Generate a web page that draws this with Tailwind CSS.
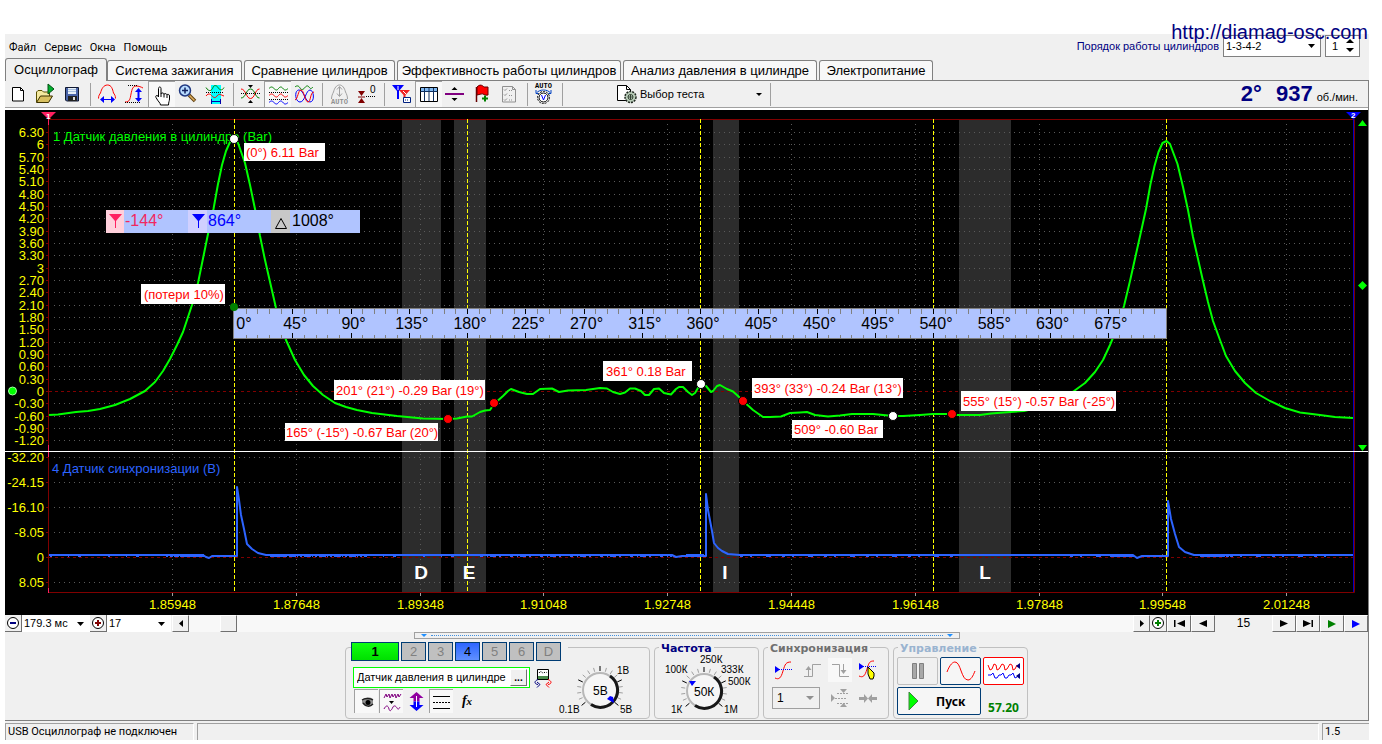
<!DOCTYPE html>
<html lang="ru">
<head>
<meta charset="utf-8">
<title>Осциллограф</title>
<script src="https://cdn.jsdelivr.net/npm/@tailwindcss/browser@4"></script>
</head>
<body class="bg-white text-black text-[11px] leading-[13px] font-['Liberation_Sans',Arial,sans-serif]">
<a href="http://diamag-osc.com" class="absolute top-[20px] right-[14px] z-10 text-[20px] leading-[24px] text-[#000080]">http://diamag-osc.com</a>

<main class="mt-[34px] ml-[5px] mr-[13px] bg-[#f0f0f0]">
  <header class="flex h-[24px] items-center justify-between pr-[9px]">
    <nav class="flex gap-2 pl-1 pt-0.5 font-[Roboto,sans-serif] text-[11px]">
      <button>Файл</button><button>Сервис</button><button>Окна</button><button>Помощь</button>
    </nav>
    <div class="flex items-center gap-1">
      <label for="order" class="text-[#000080]">Порядок работы цилиндров</label>
      <div class="relative">
        <select id="order" class="block h-[22px] w-[98px] appearance-none border border-[#808080] bg-white pl-0.5"><option>1-3-4-2</option></select>
        <svg class="pointer-events-none absolute right-1.5 top-[9px] h-[4px] w-[7px]" viewBox="0 0 7 4"><path d="M0 0h7L3.500 4z"/></svg>
      </div>
      <div class="relative">
        <input aria-label="Цилиндр" value="1" class="block h-[22px] w-[35px] border border-[#808080] bg-white pl-1.5">
        <svg class="pointer-events-none absolute right-1.5 top-[4px] h-[14px] w-[8px]" viewBox="0 0 8 14"><path d="M0 4h8L4 0zM0 9h8l-4 4z"/></svg>
      </div>
    </div>
  </header>

  <div role="tablist" class="flex h-[23px] items-end gap-0.5 border-b border-[#808080] text-[13px] leading-[18px]">
    <button role="tab" aria-selected="true" class="-mb-px -mr-0.5 h-[23px] w-[102px] whitespace-nowrap rounded-t-[3px] border border-b-0 border-[#808080] bg-[#f0f0f0]">Осциллограф</button>
    <button role="tab" class="h-[20px] w-[135px] whitespace-nowrap rounded-t-[3px] border border-b-0 border-[#808080] bg-[#f8f8f8]">Система зажигания</button>
    <button role="tab" class="h-[20px] w-[151px] whitespace-nowrap rounded-t-[3px] border border-b-0 border-[#808080] bg-[#f8f8f8]">Сравнение цилиндров</button>
    <button role="tab" class="h-[20px] w-[224px] whitespace-nowrap rounded-t-[3px] border border-b-0 border-[#808080] bg-[#f8f8f8]">Эффективность работы цилиндров</button>
    <button role="tab" class="h-[20px] w-[194px] whitespace-nowrap rounded-t-[3px] border border-b-0 border-[#808080] bg-[#f8f8f8]">Анализ давления в цилиндре</button>
    <button role="tab" class="h-[20px] w-[114px] whitespace-nowrap rounded-t-[3px] border border-b-0 border-[#808080] bg-[#f8f8f8]">Электропитание</button>
  </div>

  <section class="border-r border-b border-[#808080]">
    <div class="flex h-[29px] items-start border-b-2 border-white">
    <div class="flex h-[27px] w-full items-center border-b border-[#a0a0a0]">
      <button aria-label="Новый" class="flex h-[26px] w-[27px] items-center justify-center"><svg class="h-[24px] w-[25px]" viewBox="0 0 25 24"><path d="M6.500 5.500h8l3 3v10.500h-11z" fill="#fff" stroke="#000"/><path d="M14.500 5.500v3h3" fill="none" stroke="#000"/></svg></button>
      <button aria-label="Открыть" class="flex h-[26px] w-[27px] items-center justify-center"><svg class="h-[24px] w-[25px]" viewBox="0 0 25 24"><path d="M3.500 20v-10l1.500-1.500h4l1.500 1.500h6v4" fill="#f4e9a0" stroke="#5a5000"/><path d="M3.500 20.500l4-6.500h12l-4 6.500z" fill="#d8c060" stroke="#3a3000"/><path d="M15 2v10l6-5z" fill="#00b030" stroke="#005010"/></svg></button>
      <button aria-label="Сохранить" class="flex h-[26px] w-[27px] items-center justify-center"><svg class="h-[24px] w-[25px]" viewBox="0 0 25 24"><path d="M5.500 5.500h13v13.500h-12l-1-1z" fill="#4a64a8" stroke="#101830"/><path d="M8 6h8v6h-8z" fill="#e8f0f8"/><path d="M8 7.500h8M8 9.500h8" stroke="#a8c0e0"/><path d="M8 14h9v5h-9z" fill="#222"/><path d="M13 15h2v3h-2z" fill="#ddd"/></svg></button>
      <span class="flex w-2 justify-center"><i class="h-[23px] w-px bg-[#a0a0a0]"></i></span>
      <button aria-label="Период" class="flex h-[26px] w-[27px] items-center justify-center"><svg class="h-[24px] w-[25px]" viewBox="0 0 25 24"><path d="M3.500 16.500c0-3 1-4 2-5.500 1-4 3-8 7-8s5 4 6 8c1 1.500 2 2.500 2 5.500" fill="none" stroke="#f00"/><path d="M5 17.500l4-3.500v3h7v-3l4 3.500-4 3.500v-3h-7v3z" fill="#00f"/></svg></button>
      <button aria-label="Амплитуда" class="flex h-[26px] w-[27px] items-center justify-center"><svg class="h-[24px] w-[25px]" viewBox="0 0 25 24"><path d="M3 20c5 0 5-3 6-8s2-8 5-8 5 1 7 2" fill="none" stroke="#f00"/><path d="M6 3.500h10M3 20.500h15" stroke="#000" stroke-dasharray="1 1"/><path d="M16.500 6l3.500 4h-2.500v6h2.500l-3.500 4-3.500-4h2.500v-6h-2.500z" fill="#00f"/></svg></button>
      <button aria-label="Рука" aria-pressed="true" class="flex h-[26px] w-[27px] items-center justify-center border-l border-t border-[#a0a0a0] bg-[#f8f8f8]"><svg class="h-[24px] w-[25px]" viewBox="0 0 25 24"><path d="M8.500 14V5.500c0-2 2.500-2 2.500 0V11c0-1.500 3-1.500 3 .500 0-1.500 3-1 3 .500 0-1 2.500-1 2.500 1v3c0 2-1 3-1 6h-8c0-2-2.500-3.500-4.500-7.500-1-2 1-2.500 2-1.500z" fill="#fff" stroke="#000"/><path d="M11 11v3M14 11.500v3M17 12v3" stroke="#000"/></svg></button>
      <button aria-label="Масштаб" class="flex h-[26px] w-[27px] items-center justify-center"><svg class="h-[24px] w-[25px]" viewBox="0 0 25 24"><path d="M13 13l6 6" stroke="#604010" stroke-width="3.500"/><path d="M13.500 13.500l5 5" stroke="#e0b060" stroke-width="1.500"/><circle cx="9" cy="8.500" r="5.500" fill="#b8dcff" stroke="#203880" stroke-width="1.500"/><path d="M6 8.500h6M9 5.500v6" stroke="#102060" stroke-width="1.500"/></svg></button>
      <button aria-label="Интервал" class="flex h-[26px] w-[27px] items-center justify-center"><svg class="h-[24px] w-[25px]" viewBox="0 0 25 24"><path d="M8 3h10v19h-10z" fill="#0ff"/><path d="M3 5.500c3 5 6 3 7 0s4-2 5 0 4 4 6 0" fill="none" stroke="#008000"/><path d="M3 14c3-4 5-1 6 0s3 3 5 0 4-1 7 0" fill="none" stroke="#f00"/><path d="M3 10.500h18" stroke="#000" stroke-dasharray="1 1"/><path d="M9 19.500h8" stroke="#00a"/><path d="M8.500 17v5M17.500 17v5" stroke="#00a"/></svg></button>
      <span class="flex w-2 justify-center"><i class="h-[23px] w-px bg-[#a0a0a0]"></i></span>
      <button aria-label="Сжать" class="flex h-[26px] w-[27px] items-center justify-center"><svg class="h-[24px] w-[25px]" viewBox="0 0 25 24"><path d="M3 16c5 0 5-9 9.500-9s4.500 9 9 9" fill="none" stroke="#008000"/><path d="M3 7c5 0 5 9.500 9.500 9.500s4.500-9.500 9-9.500" fill="none" stroke="#f00"/><path d="M3 11.500h19" stroke="#000" stroke-dasharray="1 1"/><path d="M10 3h5l-2.500 3zM10 21h5l-2.500-3z"/></svg></button>
      <button aria-label="Раздельно" aria-pressed="true" class="flex h-[26px] w-[27px] items-center justify-center border-l border-t border-[#a0a0a0] bg-[#f8f8f8]"><svg class="h-[24px] w-[25px]" viewBox="0 0 25 24" fill="none"><path d="M3 5.500c2-2 3-2 5 0s3 2 4.500 0 3-2 4.500 0 3 2 5 0" stroke="#008000"/><path d="M3 12.500c2-2 3-2 5 0s3 2 4.500 0 3-2 4.500 0 3 2 5 0" stroke="#f00"/><path d="M3 19.500c2-2 3-2 5 0s3 2 4.500 0 3-2 4.500 0 3 2 5 0" stroke="#00f"/><path d="M3 9.500h19M3 16.500h19" stroke="#000" stroke-dasharray="1 1"/></svg></button>
      <button aria-label="Вместе" class="flex h-[26px] w-[27px] items-center justify-center"><svg class="h-[24px] w-[25px]" viewBox="0 0 25 24" fill="none"><path d="M3 5c2-2 4-1 5 1s3 2 4.500 0 3-3 4.500-1 2 2 4 0" stroke="#008000"/><path d="M8 20c-5 0-6-12-1-12s6 12 11 12 4-12 0-12-5 12-10 12z" stroke="#00f"/><path d="M3 18c3-1 3-10 6-10s4 12 7 12 2-10 6-10" stroke="#f00"/></svg></button>
      <span class="flex w-2 justify-center"><i class="h-[23px] w-px bg-[#a0a0a0]"></i></span>
      <button disabled aria-label="Авто" class="flex h-[26px] w-[27px] items-center justify-center"><svg class="h-[24px] w-[25px]" viewBox="0 0 25 24"><path d="M4.500 17c0-3 1-5 2-7 1-4 3-7 6-7s5 3 6 7c1 2 2 4 2 7M12.500 5v9M10 7.500l2.500-3 2.500 3M10 11.500l2.500 3 2.500-3" fill="none" stroke="#a0a0a0"/><text x="12.500" y="22" text-anchor="middle" fill="#909090" class="text-[7px] font-bold font-['Liberation_Mono',monospace]">AUTO</text></svg></button>
      <button aria-label="Ноль" class="flex h-[26px] w-[27px] items-center justify-center"><svg class="h-[24px] w-[25px]" viewBox="0 0 25 24"><path d="M4 9h7l-3.500 5zM4 21h7l-3.500-5z" fill="#800000"/><path d="M4 15h7" stroke="#800000"/><path d="M12 14.500h10" stroke="#000" stroke-dasharray="1 1"/><text x="16" y="11" class="text-[10px]">0</text></svg></button>
      <span class="flex w-2 justify-center"><i class="h-[23px] w-px bg-[#a0a0a0]"></i></span>
      <button aria-label="Маркеры" class="flex h-[26px] w-[27px] items-center justify-center"><svg class="h-[24px] w-[25px]" viewBox="0 0 25 24"><path d="M3 3h12l-5 6v8h-2v-8z" fill="#00f"/><path d="M9 4v4" stroke="#fff"/><path d="M10 8h11l-4.500 5v3h-2v-3z" fill="#f02020"/><path d="M14 9l3 3" stroke="#fff"/><path d="M14.500 15.500h7v5h-7z" fill="#fff" stroke="#002080"/><path d="M16 18h4" stroke="#002080" stroke-dasharray="1 1"/></svg></button>
      <button aria-label="Таблица" aria-pressed="true" class="flex h-[26px] w-[27px] items-center justify-center border-l border-t border-[#a0a0a0] bg-[#f8f8f8]"><svg class="h-[24px] w-[25px]" viewBox="0 0 25 24"><path d="M3.500 4.500h17v14h-17z" fill="#fff" stroke="#000"/><path d="M4 5h16v3h-16z" fill="#80b8f0"/><path d="M3.500 8.500h17M7.500 5v13M12 5v13M16.500 5v13" stroke="#103060"/></svg></button>
      <button aria-label="Линия" class="flex h-[26px] w-[27px] items-center justify-center"><svg class="h-[24px] w-[25px]" viewBox="0 0 25 24"><path d="M2 11h19v2h-19z" fill="#800080"/><path d="M8.500 8h6l-3-3zM8.500 16h6l-3 3z"/></svg></button>
      <button aria-label="Добавить метку" class="flex h-[26px] w-[27px] items-center justify-center"><svg class="h-[24px] w-[25px]" viewBox="0 0 25 24"><path d="M6.500 5v15" stroke="#600" stroke-width="1.500"/><path d="M7 5c3-3 5-2 7 0h4v8c-3 1-5-2-7-1l-4 1z" fill="#f00" stroke="#600"/><path d="M12 16.500h6M15 13.500v6" stroke="#008000" stroke-width="2"/></svg></button>
      <button disabled aria-label="Список" class="flex h-[26px] w-[27px] items-center justify-center"><svg class="h-[24px] w-[25px]" viewBox="0 0 25 24" fill="none" stroke="#909090"><path d="M5.500 4.500h10l3 3v12.500h-13zM15.500 4.500v3h3"/><path d="M7 7.500l1 1 2-2M7 12.500l1 1 2-2M7 17.500l1 1 2-2"/><path d="M12 8.500h4M12 13.500h4M12 18h4" stroke-dasharray="1 1"/></svg></button>
      <span class="flex w-2 justify-center"><i class="h-[23px] w-px bg-[#a0a0a0]"></i></span>
      <button aria-label="Авто вольт" class="flex h-[26px] w-[27px] items-center justify-center"><svg class="h-[24px] w-[25px]" viewBox="0 0 25 24"><text x="11.500" y="6" text-anchor="middle" class="text-[7px] font-bold font-['Liberation_Mono',monospace]">AUTO</text><path d="M4.500 11c3-4 11-4 14 0M4 8v3.500h3.500M19 8v3.500h-3.500" fill="none" stroke="#0040c0"/><circle cx="11.500" cy="15.500" r="6" fill="#fff" stroke="#000" stroke-dasharray="2 1"/><circle cx="11.500" cy="15.500" r="4.500" fill="#fff" stroke="#000"/><path d="M9.500 13l2 5 2-5" fill="none" stroke="#00f"/></svg></button>
      <span class="flex w-2 justify-center"><i class="h-[23px] w-px bg-[#a0a0a0]"></i></span>
      <button class="ml-[48px] flex h-[26px] w-[152px] items-center">
        <svg class="h-[24px] w-[24px]" viewBox="0 0 24 24"><path d="M3.500 3.500h9l4 4v11h-13z" fill="#fff" stroke="#000"/><path d="M12.500 3.500v4h4" fill="none" stroke="#000"/><circle cx="16.500" cy="15" r="5.500" fill="#b8ccb8" stroke="#202820" stroke-width="1.500" stroke-dasharray="2 1"/><circle cx="16.500" cy="15" r="2.500" fill="#d8e8d8" stroke="#304030"/><path d="M14 15h5M16.500 12.500v5" stroke="#304030"/></svg>
        <span class="grow pl-0.5 text-left">Выбор теста</span>
        <svg class="mr-1 h-[3px] w-[6px]" viewBox="0 0 6 3"><path d="M0 0h6l-3 3z"/></svg>
      </button>
      <span class="flex w-2 justify-center"><i class="h-[23px] w-px bg-[#a0a0a0]"></i></span>
      <p class="ml-auto mr-[10px] flex items-baseline gap-1 text-[#000080]"><b class="text-[22px] leading-[24px]">2°</b><b class="ml-2.5 text-[22px] leading-[24px]">937</b><span class="text-black">об./мин.</span></p>
    </div>
    </div>

    <svg id="chart" class="block w-full bg-black text-[13px]" viewBox="5 110 1363 505" role="img" aria-label="Осциллограмма">
      <g fill="#2c2c2c"><path d="M402 120h39v472h-39zM454 120h32v472h-32zM713 120h26v472h-26zM959 120h52v472h-52z"/></g>
      <g id="grid" stroke="#5a5a5a" stroke-dasharray="1 4"></g>
      <path d="M49 391.500H1353M49 557.500H1353" stroke="#800000" stroke-dasharray="3 3"/>
      <path d="M48.500 119.500H1354.500V592.500H48.500z" fill="none" stroke="#800000"/>
      <path d="M1353.500 119V592" stroke="#0000c0"/>
      <path d="M48.500 118v7M48.500 445v12M48.500 588v5" stroke="#ff2060"/>
      <path d="M41 112h15l-7.500 7.500z" fill="#ff2060"/><text x="46" y="119" fill="#fff" class="text-[8px] font-bold">1</text>
      <path d="M1346 112h15l-7.500 7.500z" fill="#00f"/><text x="1351" y="118" fill="#fff" class="text-[8px] font-bold">2</text>
      <g id="axis" fill="#ff0"></g>
      <text x="53" y="141" fill="#0f0">1 Датчик давления в цилиндре (Bar)</text>
      <text x="52" y="473" fill="#2d64ff">4 Датчик синхронизации (В)</text>
      <path d="M234.500 119V592M467.500 119V592M700.500 119V592M933.500 119V592M1166.500 119V592" stroke="#ff0" stroke-dasharray="4 2"/>
      <path fill="none" stroke="#0f0" stroke-width="2" stroke-linejoin="round" d="M49 415L58 414.500 76 412 88 411 100 409 115 405 130 399 145 391 155 382 163 371 170 359 177 345 183 332 192 305 198 283 208 234 213.500 209 218 184 222 165 226 151 230 142 234 139 238 143 245 163 250 185 255 209 260 236 265 260 276 308 286 340 295 360 304 375 313 386 323 395 335 403 346 407 357 410 372 413 397 416 423 418.500 448 419 457 418.500 467 416.500 472 416.500 480 412 485 410.500 490 410 494 404 503 396 508 391 511 389 515 390.500 519 392 527 394 533 394 540 389 552 388.500 559 392 568 390.500 586 390 600 388 607 388.500 613 392 620 394 625 392.500 630 388.500 635 388.500 641 391 645 395 649 395 654 389 659 388.500 664 393 671 394.500 676 389 679 387 683 387 688 392 692 395 695 393 698 388 701 384 706 386 711 392 713 391 717 386 720 385 727 389 733 391.500 738 396 743 401 753 410 763 417 770 417 781 416.500 790 413 800 412.500 807 412 815 415 828 416.500 840 415.500 852 414 873 414 893 416 903 416 920 415 933 414 947 414 952 414.500 958 415 980 415 991 413.500 1010 412 1024 411 1045 406 1062 398 1074 391 1085 383 1095 372 1103 360 1110 345 1117 328 1124 306 1130 281 1140.500 234 1146 209 1150.500 184 1154.500 166 1158.500 152 1162.500 143 1166.500 141 1170 144 1177.500 164 1183 187 1188 210 1193 237 1198 259 1203 281 1208 302 1213 321 1220 340 1226 356 1235 371 1245 383 1256 393 1270 401 1285 408 1300 412.500 1320 415 1335 417 1353 418"/>
      <g fill="none" stroke="#2d64ff">
        <path stroke-width="2" stroke-linejoin="round" d="M49 555H203L206 557 209 558 212 556H237V487L239 500 241 515 244 529 247 544 252 549 258 553 266 555H672L676 557 682 556H706V494L708 510 712 531 714 543 718 548 722 551 728 554 740 555H1133L1137 558 1142 556H1168V501L1171 519 1175 534 1179 547 1185 552 1194 555H1353"/>
        <path d="M170 556.500H205" stroke-dasharray="3 1 5 1 1 1"/><path d="M50 556.500H170M365 556.500H480" stroke-dasharray="2 16 1 9 3 27"/><path d="M270 556.500H366" stroke-dasharray="2 2 7 1 1 2"/><path d="M480 556.500H672" stroke-dasharray="3 4 1 2 6 3 2 9"/><path d="M685 556.500H704M1110 556.500H1134M1200 556.500H1230" stroke-dasharray="5 1 3 1"/><path d="M740 556.500H960M1070 556.500H1110M1230 556.500H1330" stroke-dasharray="3 7 2 14 5 11"/>
        <path stroke-width="3" d="M181 555.500H204M272 555.500H286M1115 555.500H1133M1204 555.500H1220M686 555.500H704"/>
      </g>
      <path d="M5 451.500H1368" stroke="#fff"/>
      <g fill="#fff" class="text-[19px] font-bold" text-anchor="middle"><text x="421" y="579">D</text><text x="469" y="579">E</text><text x="725" y="579">I</text><text x="985" y="579">L</text></g>
      <g id="ruler"><path d="M233.500 308.500h933v30h-933z" fill="#b0c4ff" stroke="#808080"/></g>
      <g class="text-[16px]">
        <path d="M106 210h254v23h-254z" fill="#b0c4ff"/><path d="M106 210h18v23h-18z" fill="#ffd0dc"/><path d="M188 210h19v23h-19z" fill="#d0d0ff"/><path d="M271 210h19v23h-19z" fill="#c8c8c8"/>
        <path d="M109 214h13l-6 7v7h-1v-7z" fill="#ff2060"/><path d="M192 214h13l-6 7v7h-1v-7z" fill="#00f"/><path d="M275.500 228.500h11l-5.500-10z" fill="none" stroke="#000"/>
        <text x="125" y="226" fill="#f02860">-144°</text><text x="208" y="226" fill="#00f">864°</text><text x="292" y="226">1008°</text>
      </g>
      <path fill="#fff" d="M244 143h81v18h-81zM141 284h84v20h-84zM334 380h151v20h-151zM285 423h153v18h-153zM603 361h89v20h-89zM752 378h151v20h-151zM792 420h91v18h-91zM961 391h155v20h-155z"/>
      <g fill="#f00"><text x="246" y="157">(0°) 6.11 Bar</text><text x="144" y="299">(потери 10%)</text><text x="336" y="395">201° (21°) -0.29 Bar (19°)</text><text x="286" y="437">165° (-15°) -0.67 Bar (20°)</text><text x="606" y="376">361° 0.18 Bar</text><text x="754" y="393">393° (33°) -0.24 Bar (13°)</text><text x="794" y="434">509° -0.60 Bar</text><text x="963" y="406">555° (15°) -0.57 Bar (-25°)</text></g>
      <g stroke="#000"><g fill="#fff"><circle cx="234" cy="139" r="4.500"/><circle cx="701" cy="384" r="4.500"/><circle cx="893" cy="416" r="4.500"/></g><g fill="#f00"><circle cx="448" cy="419" r="4.500"/><circle cx="494" cy="403" r="4.500"/><circle cx="743" cy="401" r="4.500"/><circle cx="952" cy="414" r="4.500"/></g></g>
      <circle cx="234" cy="307" r="4" fill="#008000"/><circle cx="12.500" cy="391" r="4" fill="#0f0" stroke="#a0ffa0"/>
      <path d="M1358 126h9l-4.500-6zM1362.500 281l4.500 4.500-4.500 4.500-4.500-4.500zM1358 445h9l-4.500 6z" fill="#0f0"/>
    </svg>

    <div class="flex h-[17px] items-stretch">
      <button aria-label="Уменьшить" class="w-[17px] border-r border-b border-[#707070] bg-[#f0f0f0]"><svg class="block h-[16px] w-[16px]" viewBox="0 0 16 16"><circle cx="8" cy="8" r="5.500" fill="#fff" stroke="#000"/><path d="M5 8h6" stroke="#000080" stroke-width="2"/></svg></button>
      <div class="relative"><select aria-label="Длительность" class="block h-[17px] w-[68px] appearance-none bg-white pl-0.5"><option>179.3 мс</option></select><svg class="pointer-events-none absolute right-1.5 top-[7px] h-[4px] w-[7px]" viewBox="0 0 7 4"><path d="M0 0h7L3.500 4z"/></svg></div>
      <button aria-label="Увеличить" class="w-[17px] border-r border-b border-[#707070] bg-[#f0f0f0]"><svg class="block h-[16px] w-[16px]" viewBox="0 0 16 16"><circle cx="8" cy="8" r="5.500" fill="#fff" stroke="#000"/><path d="M5 8h6M8 5v6" stroke="#800000" stroke-width="2"/></svg></button>
      <div class="relative"><select aria-label="Кадр" class="block h-[17px] w-[64px] appearance-none bg-white pl-0.5"><option>17</option></select><svg class="pointer-events-none absolute right-1.5 top-[7px] h-[4px] w-[7px]" viewBox="0 0 7 4"><path d="M0 0h7L3.500 4z"/></svg></div>
      <button aria-label="Влево" class="ml-px flex w-[17px] items-center justify-center border border-l-white border-t-white border-r-[#707070] border-b-[#707070]"><svg class="h-[7px] w-[4px]" viewBox="0 0 4 7"><path d="M4 0v7L0 3.500z"/></svg></button>
      <div class="grow bg-[#f8f8f8] pl-[31px]"><button aria-label="Полоса прокрутки" class="block h-[17px] w-[17px] border border-l-white border-t-white border-r-[#707070] border-b-[#707070] bg-[#f0f0f0]"></button></div>
      <button aria-label="Вправо" class="flex w-[17px] items-center justify-center border border-l-white border-t-white border-r-[#707070] border-b-[#707070]"><svg class="h-[7px] w-[4px]" viewBox="0 0 4 7"><path d="M0 0v7l4-3.500z"/></svg></button>
      <button aria-label="Добавить" class="w-[17px] border-r border-b border-[#707070]"><svg class="block h-[16px] w-[16px]" viewBox="0 0 16 16"><circle cx="8" cy="8" r="5.500" fill="#fff" stroke="#000"/><path d="M5 8h6M8 5v6" stroke="#008000" stroke-width="2"/></svg></button>
      <button aria-label="В начало" class="flex w-[24px] items-center justify-center border border-l-white border-t-white border-r-[#707070] border-b-[#707070]"><svg class="h-[7px] w-[11px]" viewBox="0 0 11 7"><path d="M0 0h1.500v7H0zM11 0v7L3 3.500z"/></svg></button>
      <button aria-label="Назад" class="flex w-[24px] items-center justify-center border border-l-white border-t-white border-r-[#707070] border-b-[#707070]"><svg class="h-[7px] w-[8px]" viewBox="0 0 8 7"><path d="M8 0v7L0 3.500z"/></svg></button>
      <output class="w-[57px] self-center text-center text-[12px]">15</output>
      <button aria-label="Вперёд" class="flex w-[24px] items-center justify-center border border-l-white border-t-white border-r-[#707070] border-b-[#707070]"><svg class="h-[7px] w-[8px]" viewBox="0 0 8 7"><path d="M0 0v7l8-3.500z"/></svg></button>
      <button aria-label="В конец" class="flex w-[24px] items-center justify-center border border-l-white border-t-white border-r-[#707070] border-b-[#707070]"><svg class="h-[7px] w-[10px]" viewBox="0 0 10 7"><path d="M8.500 0H10v7H8.500zM0 0v7l8-3.500z"/></svg></button>
      <button aria-label="Играть" class="flex w-[24px] items-center justify-center border border-l-white border-t-white border-r-[#707070] border-b-[#707070]"><svg class="h-[8px] w-[8px]" viewBox="0 0 8 8"><path d="M0 0v8l8-4z" fill="#008000"/></svg></button>
      <button aria-label="Играть всё" class="flex w-[24px] items-center justify-center border border-l-white border-t-white border-r-[#707070] border-b-[#707070]"><svg class="h-[8px] w-[8px]" viewBox="0 0 8 8"><path d="M0 0v8l8-4z" fill="#00f"/></svg></button>
    </div>

    <div class="mx-auto flex h-[7px] w-[546px] items-center justify-between border border-[#a0a0a0] px-1.5">
      <svg class="h-[3px] w-[6px]" viewBox="0 0 6 3"><path d="M0 0h6l-3 3z" fill="#2090ff"/></svg>
      <i class="mx-1 grow border-t border-dotted border-[#4090e0]"></i>
      <svg class="h-[3px] w-[6px]" viewBox="0 0 6 3"><path d="M0 0h6l-3 3z" fill="#2090ff"/></svg>
    </div>

    <div class="flex items-stretch justify-center gap-1 pb-px pt-2">
      <section class="flex min-h-[72px] w-[305px] rounded-[4px] border border-[#c0c0c0] px-[5px]">
        <div class="w-[206px] shrink-0">
          <div class="-mt-[6px] flex w-[217px] gap-0.5 bg-[#f0f0f0] text-[13px] text-[#808080]">
            <button class="h-[19px] w-[48px] border border-[#003c74] bg-linear-to-b from-[#10ff10] to-[#00e000] font-bold text-black">1</button>
            <button class="h-[19px] w-[25px] border border-[#003c74] bg-[#c0c0c0]">2</button>
            <button class="h-[19px] w-[25px] border border-[#003c74] bg-[#c0c0c0]">3</button>
            <button class="h-[19px] w-[25px] border border-[#003c74] bg-linear-to-b from-[#2d64ff] to-[#6090ff] text-black">4</button>
            <button class="h-[19px] w-[25px] border border-[#003c74] bg-[#c0c0c0]">5</button>
            <button class="h-[19px] w-[25px] border border-[#003c74] bg-[#c0c0c0]">6</button>
            <button class="h-[19px] w-[25px] border border-[#003c74] bg-[#c0c0c0]">D</button>
          </div>
          <div class="ml-0.5 mt-1.5 flex items-center gap-1">
            <div class="flex h-[21px] w-[177px] items-center border border-[#0f0] bg-white pl-[3px] pr-0.5">
              <input aria-label="Датчик" value="Датчик давления в цилиндре" class="min-w-0 grow bg-white text-[11px]">
              <button aria-label="Выбрать датчик" class="h-[17px] w-[17px] border border-l-white border-t-white border-r-[#707070] border-b-[#707070] bg-[#f0f0f0] text-[10px] font-bold leading-[8px]">...</button>
            </div>
            <button aria-label="Поменять" class="shrink-0"><svg class="block h-[20px] w-[18px]" viewBox="0 0 18 20"><path d="M3.500 1.500h11v10h-11z" fill="#fff" stroke="#000"/><path d="M4 8h10v3h-10z" fill="#4a8a4a"/><path d="M5 5c2-3 3 0 4 0s3-2 4 0" fill="none" stroke="#000" stroke-dasharray="1 1"/><path d="M4 11.500C0 13 0 16 4 16.500M3 14l3 2.500-3 3" fill="none" stroke="#000080"/><path d="M14 11.500c4 1.500 4 4.500 0 5M15 14l-3 2.500 3 3" fill="none" stroke="#f00"/></svg></button>
          </div>
          <div class="ml-[3px] mt-px flex">
            <button aria-label="Видимость" aria-pressed="true" class="h-[24px] w-[24px] border-l border-t border-[#a0a0a0] bg-[#f8f8f8]"><svg class="block h-[23px] w-[23px]" viewBox="0 0 23 23"><path d="M7 10c3-3 8-3 11-1v5c-2 3-7 4-11-1z" fill="#909090"/><path d="M7 10c3-2 8-2 11 0M8 13c3 4 7 4 10 1" fill="none" stroke="#202020" stroke-width="1.500"/><circle cx="13" cy="12.500" r="2.500"/></svg></button>
            <button aria-label="Фильтр" aria-pressed="true" class="ml-px h-[24px] w-[24px] border-l border-t border-[#a0a0a0] bg-[#f8f8f8]"><svg class="block h-[23px] w-[23px]" viewBox="0 0 23 23" fill="none"><path d="M4 8l2-4 1 3 2-3 1 4 2-4 1 3 2-3 1 4 2-4 1 3 2-3" stroke="#800080"/><path d="M4 19c2-4 4-4 5 0s3 0 4-2 3-1 4 1 2 1 3-1" stroke="#800080"/><path d="M9 11h5l-2.500 3z" fill="#000"/></svg></button>
            <button aria-label="Сдвиг" class="ml-px h-[24px] w-[24px]"><svg class="block h-[24px] w-[24px]" viewBox="0 0 24 24"><path d="M12.500 3l7 6h-4v3.500h-6V9h-4z" fill="#9000a0"/><path d="M12.500 22l-7-6h4v-3.500h6V16h4z" fill="#00f"/><path d="M12.500 7v11" stroke="#fff"/></svg></button>
            <button aria-label="Уровни" aria-pressed="true" class="ml-px h-[24px] w-[24px] border-l border-t border-[#a0a0a0] bg-[#f8f8f8]"><svg class="block h-[23px] w-[23px]" viewBox="0 0 23 23" stroke="#000"><path d="M3 6.500h17M3 18.500h17"/><path d="M3 12.500h17" stroke-dasharray="2 1"/></svg></button>
            <button aria-label="Функция" class="ml-px h-[24px] w-[26px] font-['Liberation_Serif',serif] text-[14px] font-bold italic">f<span class="text-[11px]">x</span></button>
          </div>
        </div>
        <svg class="h-[70px] w-[87px] shrink-0 text-[10px]" viewBox="558 649 87 70">
          <g class="ticks" data-cx="601" data-cy="691"></g>
          <circle cx="601" cy="691" r="17" fill="#f6f6f6" stroke="#b8b8b8" stroke-width="2"/><path d="M611 677a17 17 0 0 1-19 28.500" fill="none" stroke="#181818" stroke-width="3"/>
          <path d="M608 700l7 4-1-6-3-1z" fill="#00f"/>
          <text x="594" y="696" class="text-[12px]">5В</text><text x="618" y="675">1В</text><text x="621" y="714">5В</text><text x="560" y="714">0.1В</text>
        </svg>
      </section>

      <section class="min-h-[72px] w-[105px] rounded-[4px] border border-[#c0c0c0]">
        <h2 class="-mt-[6px] ml-1 w-fit bg-[#f0f0f0] px-0.5 font-['DejaVu_Sans',sans-serif] text-[11px] font-bold leading-[14px] text-[#000080]">Частота</h2>
        <svg class="-mt-0.5 block h-[64px] w-full text-[10px]" viewBox="656 655 103 64">
          <g class="ticks" data-cx="705" data-cy="692"></g>
          <circle cx="705" cy="692" r="17" fill="#f6f6f6" stroke="#b8b8b8" stroke-width="2"/><path d="M715 678a17 17 0 0 1-19 28.500" fill="none" stroke="#181818" stroke-width="3"/>
          <path d="M690 682h7l-4 5z" fill="#00f"/>
          <text x="695" y="697" class="text-[12px]">50К</text><text x="666" y="674">100К</text><text x="701" y="664">250К</text><text x="722" y="674">333К</text><text x="729" y="686">500К</text><text x="672" y="714">1К</text><text x="725" y="714">1М</text>
        </svg>
      </section>

      <section class="min-h-[72px] w-[126px] rounded-[4px] border border-[#c0c0c0]">
        <h2 class="-mt-[6px] ml-1 w-fit bg-[#f0f0f0] px-0.5 font-['DejaVu_Sans',sans-serif] text-[11px] font-bold leading-[14px] text-[#707070]">Синхронизация</h2>
        <div class="grid grid-cols-4 items-center justify-items-center px-1.5 pt-0.5">
          <button aria-label="Синхронизация по уровню"><svg class="block h-[24px] w-[24px]" viewBox="0 0 24 24" fill="none"><path d="M3 20c4 2 6 0 8-7s3-9 8-9" stroke="#f00"/><path d="M3 11.500h18" stroke="#00f" stroke-dasharray="1 1"/><path d="M3 8v7l5-3.500z" fill="#00f"/></svg></button>
          <button disabled aria-label="Фронт"><svg class="block h-[24px] w-[24px]" viewBox="0 0 24 24" fill="none"><path d="M4 18.500h8.500v-12H21M8.500 18v-7" stroke="#a0a0a0"/><path d="M5.500 12h6l-3-4z" fill="#a0a0a0"/></svg></button>
          <button disabled aria-label="Спад" class="bg-[#f8f8f8]"><svg class="block h-[24px] w-[24px]" viewBox="0 0 24 24" fill="none"><path d="M4 6.500h7.500v12H21M15.500 6v8" stroke="#a0a0a0"/><path d="M12.500 12h6l-3 4z" fill="#a0a0a0"/></svg></button>
          <button aria-label="Указать уровень"><svg class="block h-[24px] w-[24px]" viewBox="0 0 24 24" fill="none"><path d="M3 18c4 2 6 0 8-7s3-8 7-8" stroke="#f00"/><path d="M3 8.500h18" stroke="#00f" stroke-dasharray="1 1"/><path d="M3 5v7l5-3.500z" fill="#00f"/><path d="M12 9l6 6v3l-1 3h-3l-2-5z" fill="#ff0" stroke="#000"/></svg></button>
          <div class="relative col-span-2 justify-self-start"><select disabled aria-label="Канал синхронизации" class="ml-0.5 block h-[22px] w-[48px] appearance-none border border-[#a0a0a0] bg-[#f0f0f0] pl-1 text-[12px] text-black opacity-100"><option>1</option></select><svg class="pointer-events-none absolute right-1.5 top-[9px] h-[4px] w-[8px]" viewBox="0 0 8 4"><path d="M0 0h8L4 4z" fill="#909090"/></svg></div>
          <button disabled aria-label="Пределы"><svg class="my-1 block h-[24px] w-[24px]" viewBox="0 0 24 24" fill="none"><path d="M9 7.500h12M7 12.500h12M9 17.500h12" stroke="#a0a0a0" stroke-dasharray="2 1"/><path d="M3 8v8l4-4zM12 3h7l-3.500 4zM12 21h7l-3.500-4z" fill="#a0a0a0"/></svg></button>
          <button disabled aria-label="Сблизить"><svg class="block h-[24px] w-[24px]" viewBox="0 0 24 24"><path d="M3 11h5v-3l4 4.500-4 4.500v-3H3zM21 11h-5v-3l-4 4.500 4 4.500v-3h5z" fill="#a0a0a0"/></svg></button>
        </div>
      </section>

      <section class="min-h-[72px] w-[135px] rounded-[4px] border border-[#c0c0c0]">
        <h2 class="-mt-[6px] ml-1 w-fit bg-[#f0f0f0] px-0.5 font-['DejaVu_Sans',sans-serif] text-[11px] font-bold leading-[14px] text-[#9ab4d0]">Управление</h2>
        <div class="grid grid-cols-3 gap-x-0.5 gap-y-0.5 px-[3px] pt-px">
          <button disabled aria-label="Пауза" class="flex h-[28px] items-center justify-center rounded-[2px] border border-[#c0c0c0]"><svg class="h-[16px] w-[12px]" viewBox="0 0 12 16"><path d="M.500 .500h4v15h-4zM7.500 .500h4v15h-4z" fill="#a8a8a8" stroke="#808080"/></svg></button>
          <button aria-label="Осциллограмма" class="flex h-[28px] items-center justify-center rounded-[2px] border border-[#003c74] bg-[#f6f6f6]"><svg class="h-[22px] w-[32px]" viewBox="0 0 32 22"><path d="M2 12C5 4 8 2 10 2c6 0 6 18 13 18 3 0 5-4 7-9" fill="none" stroke="#f00"/></svg></button>
          <button aria-label="Каналы" class="flex h-[28px] items-center justify-center rounded-[2px] border border-[#f00] bg-white"><svg class="h-[22px] w-[34px]" viewBox="0 0 34 22" fill="none"><path d="M1 5l2 5 2-1 2-5 2 1 1 5 2-1 3-5 2 1 1 5 2-1 3-5 2 1 1 5 2-1 2-4" stroke="#f00"/><path d="M1 15h3l2-2 2 5 2 0 2-3h2l2-2 2 5 2 0 2-3h2l2-2 2 5 2-1" stroke="#00f"/><path d="M33 3v6l-4-3zM33 13v6l-4-3z" fill="#000080"/></svg></button>
          <button class="col-span-2 flex h-[28px] items-center rounded-[2px] border border-[#003c74] bg-[#f6f6f6] pl-2.5 font-['Noto_Sans',sans-serif] text-[12px] font-bold"><svg class="mr-4 h-[20px] w-[12px]" viewBox="0 0 12 20"><path d="M1 1v18l9-9z" fill="#0f0" stroke="#408040"/></svg>Пуск</button>
          <output class="self-end pb-px text-center font-['Noto_Sans',sans-serif] text-[12px] font-bold text-[#008000]">57.20</output>
        </div>
      </section>
    </div>
  </section>

  <footer class="flex gap-[3px] pt-0.5 font-[Roboto,sans-serif] text-[11px] leading-[16px]">
    <p class="w-[189px] border-l border-t border-[#a0a0a0] border-r border-r-white pl-0.5">USB Осциллограф не подключен</p>
    <p class="grow border-l border-t border-[#a0a0a0] border-r border-r-white"></p>
    <p class="w-[47px] border-l border-t border-[#a0a0a0] pl-0.5">1.5</p>
  </footer>
</main>

<script>
const NS = 'http://www.w3.org/2000/svg';
const add = (parent, tag, attrs, text) => {
  const el = document.createElementNS(NS, tag);
  for (const k in attrs) el.setAttribute(k, attrs[k]);
  if (text !== undefined) el.textContent = text;
  parent.appendChild(el);
};
const grid = document.getElementById('grid');
const axis = document.getElementById('axis');
const level = (y, label, zero) => {
  if (!zero) add(grid, 'path', { d: `M54 ${y + 0.5}H1352` });
  add(axis, 'path', { d: `M46 ${y + 0.5}h3`, stroke: '#800000' });
  add(axis, 'text', { x: 44, y: y + 5, 'text-anchor': 'end' }, label);
};
// pressure channel: 0.3 Bar per division
for (let i = 21; i >= -4; i--) {
  const v = i * 0.3;
  level(Math.round(391 - i * 12.33), i % 10 ? v.toFixed(2) : String(Math.round(v)), i === 0);
}
// sync channel: 8.05 V per division
['-32.20', '-24.15', '-16.10', '-8.05', '0', '8.05'].forEach((t, i) => level(457 + i * 25, t, t === '0'));
// time axis
for (let i = 0; i < 10; i++) {
  const x = Math.round(172 + i * 123.8) + 0.5;
  add(grid, 'path', { d: `M${x} 124V592` });
  add(axis, 'path', { d: `M${x} 593v3`, stroke: '#a0a0a0' });
  add(axis, 'text', { x, y: 609, 'text-anchor': 'middle' }, (1.85948 + i * 0.017).toFixed(5));
}
// crank angle ruler: 9 degrees per small division
const ruler = document.getElementById('ruler');
for (let a = 9; a < 720; a += 9) {
  const x = Math.round(234 + a * 932 / 720) + 0.5;
  add(ruler, 'path', { d: `M${x} 309v5M${x} 338v${a % 45 ? -3 : -5}`, stroke: a % 45 ? '#808080' : '#000' });
}
for (let a = 0; a < 720; a += 45)
  add(ruler, 'text', { x: a ? 237 + a * 932 / 720 : 244, y: 329, 'text-anchor': 'middle', class: 'text-[16px]' }, a + '°');
// knob scales
document.querySelectorAll('.ticks').forEach(g => {
  const cx = +g.dataset.cx, cy = +g.dataset.cy;
  for (let i = 0; i <= 16; i++) {
    const t = (140 + i * 16.25) * Math.PI / 180, r = i % 4 ? 23 : 24;
    add(g, 'path', { d: `M${cx + 19 * Math.cos(t)} ${cy + 19 * Math.sin(t)}L${cx + r * Math.cos(t)} ${cy + r * Math.sin(t)}`, stroke: i % 4 ? '#a0a0a0' : '#000' });
  }
});
</script>
</body>
</html>
